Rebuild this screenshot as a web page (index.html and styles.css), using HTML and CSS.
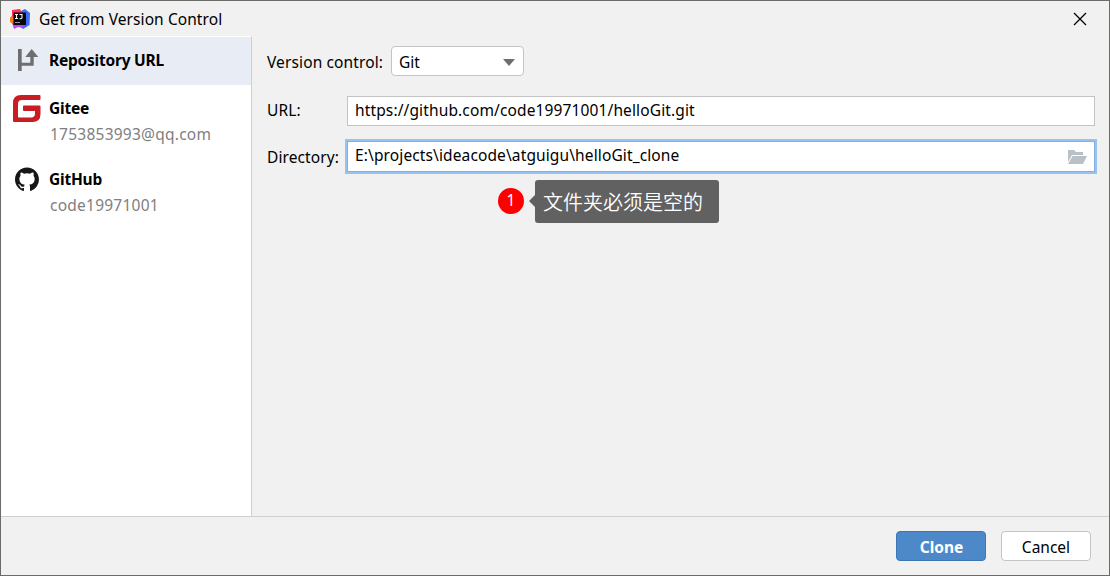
FILE: index.html
```html
<!DOCTYPE html>
<html lang="en">
<head>
<meta charset="utf-8">
<title>Get from Version Control</title>
<link rel="stylesheet" href="styles.css">
</head>
<body>
<div class="window">
  <header class="titlebar">
    <svg class="app-icon" width="20" height="20" viewBox="0 0 20 20">
      <path d="M2 1l8-1 2 4L6 13l-4-1-2-3 2-2z" fill="#fe315d"/>
      <path d="M0 9l4-2v9l-4-3z" fill="#f97a12"/>
      <path d="M11 2l4-2 5 4-.5 12-6.500 4-4-3z" fill="#3d6df2"/>
      <path d="M2 14h12l-1 5-5-1-4 2z" fill="#b74af7"/>
      <path d="M3.500 3.500h12.500v12.500H3.500z" fill="#08090c"/>
      <path d="M5 5.500h3M6.500 5.500v4M5 9.500h3M9.500 5.500h2.500v3q0 1.200-1.200 1.200H9.500" fill="none" stroke="#fff" stroke-width="1.100"/>
      <path d="M5 13.500h5" stroke="#999"/>
    </svg>
    <span class="title">Get from Version Control</span>
    <svg class="close" width="14" height="14" viewBox="0 0 14 14"><path d="M1 1l12 12M13 1L1 13" stroke="#000" stroke-width="1.300"/></svg>
  </header>
  <div class="body">
    <aside class="sidebar">
      <div class="item selected">
        <svg class="icon" width="28" height="28" viewBox="0 0 28 28"><path d="M5 3h3.700v13.700h8.600V11h-5l6.400-8 6.600 8h-4.600v8.700h-12V25H5z" fill="#6e6e6e"/></svg>
        <span class="name repository">Repository URL</span>
      </div>
      <div class="item gitee">
        <svg class="icon" width="28" height="28" viewBox="0 0 28 28"><path d="M8 0h18.500q1 0 1 1v3q0 1-1 1H9Q5 5 5 9v12.500q0 1 1 1h12q4 0 4-4V16H11q-1 0-1-1v-3.500q0-1 1-1h15.500q1 0 1 1V19q0 8-8 8H1q-1 0-1-1V8q0-8 8-8z" fill="#c71d23"/></svg>
        <span class="name">Gitee</span>
        <span class="account">1753853993@qq.com</span>
      </div>
      <div class="item github">
        <svg class="icon" width="28" height="28" viewBox="0 0 28 28"><path transform="translate(2 1.500) scale(1.500)" d="M8 0C3.580 0 0 3.580 0 8c0 3.540 2.290 6.530 5.470 7.590.4.070.55-.17.55-.38 0-.19-.01-.82-.01-1.490-2.010.37-2.530-.49-2.690-.94-.09-.23-.48-.94-.82-1.130-.28-.15-.68-.52-.01-.53.63-.01 1.080.58 1.230.82.72 1.210 1.870.87 2.330.66.07-.52.28-.87.51-1.070-1.780-.2-3.640-.89-3.640-3.950 0-.87.31-1.590.82-2.150-.08-.2-.36-1.020.08-2.120 0 0 .67-.21 2.200.82a7.500 7.500 0 0 1 4 0c1.530-1.040 2.200-.82 2.200-.82.44 1.100.16 1.920.08 2.120.51.56.82 1.270.82 2.150 0 3.070-1.870 3.750-3.650 3.950.29.25.54.73.54 1.480 0 1.070-.01 1.930-.01 2.200 0 .21.15.46.55.38A8.010 8.010 0 0 0 16 8c0-4.420-3.580-8-8-8z" fill="#181616"/></svg>
        <span class="name">GitHub</span>
        <span class="account">code19971001</span>
      </div>
    </aside>
    <main class="content">
      <div class="row version">
        <label class="vc-label">Version control:</label>
        <div class="select"><span>Git</span><svg width="12" height="7" viewBox="0 0 12 7"><path d="M0 0h12L6 7z" fill="#6e6e6e"/></svg></div>
      </div>
      <div class="row url">
        <label class="field-label">URL:</label>
        <div class="field"><span>https://github.com/code19971001/helloGit.git</span></div>
      </div>
      <div class="row directory">
        <label class="field-label">Directory:</label>
        <div class="field focused"><span>E:\projects\ideacode\atguigu\helloGit_clone</span>
          <svg width="20" height="16" viewBox="0 0 20 16"><path d="M1 1h6l2 2h7v3H5l-4 7z" fill="#bac1c6"/><path d="M5.500 7H20l-4 8H1z" fill="#bac1c6"/></svg>
        </div>
      </div>
    </main>
  </div>
  <footer class="footer">
    <div class="button primary">Clone</div>
    <div class="button">Cancel</div>
  </footer>
  <div class="badge">1</div>
  <div class="tooltip">文件夹必须是空的</div>
</div>
</body>
</html>
```
FILE: styles.css
```css
* { box-sizing: border-box; }
body { margin: 0; font: 15.5px/20px "Noto Sans", "Noto Sans CJK SC", sans-serif; color: #000; }
svg { display: block; flex: none; }
.window { position: relative; display: flex; flex-direction: column; width: 1110px; height: 576px; border: 1px solid #6b6b69; background: #f1f1f1; white-space: nowrap; }
.titlebar { display: flex; align-items: center; height: 35px; padding: 0 22px 0 9px; }
.title { margin-left: 9px; letter-spacing: .08px; }
.close { margin-left: auto; }
.body { display: flex; height: 481px; border-bottom: 1px solid #cfcfcf; }
.sidebar { width: 251px; background: #fff; border-top: 1px solid #fff; border-right: 1px solid #cfcfcf; }
.item { display: grid; grid-template-columns: 28px 1fr; column-gap: 8px; padding-left: 12px; }
.selected { height: 48px; align-items: center; padding-bottom: 2px; background: #e8edf5; }
.name { font-weight: 700; letter-spacing: -.22px; }
.account { grid-column: 2; color: #808080; padding-left: 1px; letter-spacing: .24px; }
.gitee, .github { row-gap: 1px; grid-template-rows: 28px 20px; }
.gitee { padding-top: 10px; }
.github { padding-top: 22px; }
.gitee .name, .github .name { padding-top: 3px; }
.content { flex: 1; padding: 10px 12px 0 15px; }
.row { display: flex; align-items: center; }
.version { height: 30px; }
.vc-label { width: 124px; padding-top: 2px; letter-spacing: .12px; }
.select { display: flex; align-items: center; justify-content: space-between; width: 133px; height: 30px; padding: 2px 8px 0 7px; background: #fff; border: 1px solid #c4c4c4; border-radius: 4px; }
.url { margin-top: 20px; }
.field-label { width: 80px; flex: none; letter-spacing: .1px; }
.url .field-label { padding-bottom: 2px; }
.field { display: flex; align-items: center; justify-content: space-between; width: 748px; flex: none; height: 30px; padding: 0 7px 2px 7px; background: #fff; border: 1px solid #c4c4c4; letter-spacing: .13px; }
.directory { margin-top: 15px; }
.directory .field-label { padding-top: 1px; }
.focused { height: 31px; padding-bottom: 3px; border-color: #87afda; box-shadow: 0 0 0 2px #97c3f3; letter-spacing: .12px; }
.focused svg { margin-top: 3px; }
.footer { display: flex; gap: 15px; padding: 14px 18px 0 0; justify-content: flex-end; }
.button { width: 90px; height: 30px; padding-top: 5px; text-align: center; background: #fff; border: 1px solid #c4c4c4; border-radius: 4px; }
.primary { padding-left: 1px; color: #fff; font-weight: 700; background: #4d89c9; border-color: #3b76b7; }
.badge { position: absolute; left: 497px; top: 187px; width: 26px; height: 26px; border-radius: 50%; background: #f00; color: #fff; text-align: center; line-height: 24px; }
.tooltip { position: absolute; left: 534px; top: 179px; width: 184px; height: 43px; padding-left: 8px; border-radius: 3px; background: #616161; color: #fff; font: 350 20px/43px "Noto Sans CJK SC", sans-serif; }
.tooltip::before { content: ""; position: absolute; left: -6px; top: 15px; border: 6px solid transparent; border-left: 0; border-right-color: #616161; }
```
